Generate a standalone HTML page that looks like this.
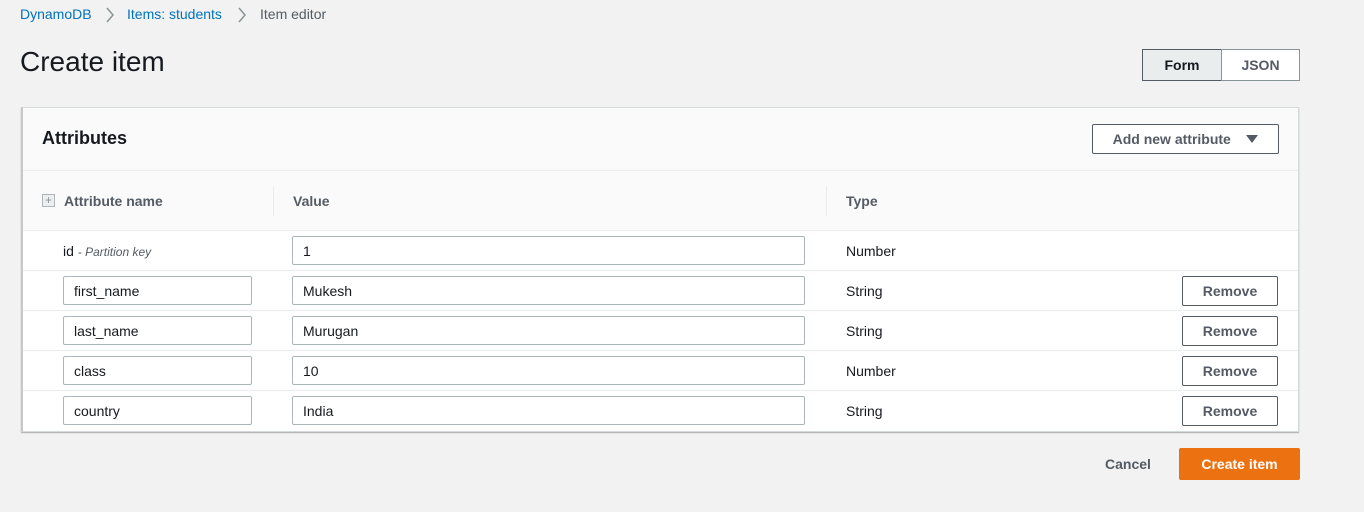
<!DOCTYPE html>
<html><head><style>
*{box-sizing:border-box;margin:0;padding:0}
body{width:1364px;height:512px;background:#f2f2f2;font-family:"Liberation Sans",sans-serif;position:relative;overflow:hidden;color:#16191f}
.a{position:absolute;white-space:nowrap}
.bc{top:6px;font-size:14px}
.lnk{color:#0073bb}
h1{position:absolute;left:20px;top:46px;font-size:28px;font-weight:400;color:#16191f}
.tog{position:absolute;top:49px;height:32px;font-size:14px;font-weight:bold;display:flex;align-items:center;justify-content:center;border:1px solid #545b64}
.panel{position:absolute;left:21px;top:107px;width:1278px;height:325px;background:#fff;border:1px solid #d5dbdb;border-left:2px solid #c7c7c7;box-shadow:0 1px 1px rgba(0,0,0,.3)}
.ph{position:absolute;left:0;top:0;width:100%;height:63px;background:#fafafa;border-bottom:1px solid #eaeded}
.th{position:absolute;left:0;top:63px;width:100%;height:60px;background:#fafafa;border-bottom:1px solid #eaeded}
.row{position:absolute;left:0;width:100%;height:40px;border-bottom:1px solid #eaeded}
.inp{position:absolute;height:29px;border:1px solid #aab7b8;border-radius:2px;background:#fff;font-size:14px;padding:6px 10px;color:#16191f}
.btn{position:absolute;border:1px solid #545b64;border-radius:2px;background:#fff;font-size:14px;font-weight:bold;color:#545b64;display:flex;align-items:center;justify-content:center}
.hd{font-size:14px;font-weight:bold;color:#545b64}
.ty{font-size:14px;color:#16191f}
</style></head><body>
<div class="a bc" style="left:20px"><span class="lnk">DynamoDB</span></div>
<svg class="a" style="left:104px;top:6px" width="12" height="18" viewBox="0 0 12 18"><path d="M3 2 L9 9 L3 16" fill="none" stroke="#879596" stroke-width="1.5"/></svg>
<div class="a bc" style="left:127px"><span class="lnk">Items: students</span></div>
<svg class="a" style="left:236px;top:6px" width="12" height="18" viewBox="0 0 12 18"><path d="M3 2 L9 9 L3 16" fill="none" stroke="#879596" stroke-width="1.5"/></svg>
<div class="a bc" style="left:260px;color:#545b64">Item editor</div>
<h1>Create item</h1>
<div class="tog" style="left:1142px;width:80px;background:#eaeded;color:#16191f">Form</div>
<div class="tog" style="left:1221px;width:79px;background:#fff;color:#545b64;border-color:#879596">JSON</div>

<div class="panel">
 <div class="ph"></div>
 <div class="a" style="left:19px;top:20px;font-size:18px;font-weight:bold">Attributes</div>
 <div class="btn" style="left:1069px;top:16px;width:187px;height:30px">Add new attribute&nbsp;&nbsp;&nbsp;&nbsp;<svg width="12" height="10" viewBox="0 0 12 10"><path d="M0 1 L12 1 L6 9Z" fill="#545b64"/></svg></div>
 <div class="th"></div>
 <div class="a" style="left:19px;top:86px;width:13px;height:13px;border:1px solid #aab7b8;background:#eee;font-size:12px;line-height:10px;text-align:center;color:#879596">+</div>
 <div class="a hd" style="left:41px;top:85px">Attribute name</div>
 <div class="a" style="left:250px;top:78px;width:1px;height:30px;background:#eaeded"></div>
 <div class="a hd" style="left:270px;top:85px">Value</div>
 <div class="a" style="left:803px;top:78px;width:1px;height:30px;background:#eaeded"></div>
 <div class="a hd" style="left:823px;top:85px">Type</div>

 <div class="row" style="top:123px"></div>
 <div class="a" style="left:40px;top:135px;font-size:14px;color:#16191f">id <span style="font-size:12px;font-style:italic;color:#545b64">- Partition key</span></div>
 <div class="inp" style="left:269px;top:128px;width:513px">1</div>
 <div class="a ty" style="left:823px;top:135px">Number</div>

 <div class="row" style="top:163px"></div>
 <div class="inp" style="left:40px;top:168px;width:189px">first_name</div>
 <div class="inp" style="left:269px;top:168px;width:513px">Mukesh</div>
 <div class="a ty" style="left:823px;top:175px">String</div>
 <div class="btn" style="left:1159px;top:168px;width:96px;height:30px">Remove</div>

 <div class="row" style="top:203px"></div>
 <div class="inp" style="left:40px;top:208px;width:189px">last_name</div>
 <div class="inp" style="left:269px;top:208px;width:513px">Murugan</div>
 <div class="a ty" style="left:823px;top:215px">String</div>
 <div class="btn" style="left:1159px;top:208px;width:96px;height:30px">Remove</div>

 <div class="row" style="top:243px"></div>
 <div class="inp" style="left:40px;top:248px;width:189px">class</div>
 <div class="inp" style="left:269px;top:248px;width:513px">10</div>
 <div class="a ty" style="left:823px;top:255px">Number</div>
 <div class="btn" style="left:1159px;top:248px;width:96px;height:30px">Remove</div>

 <div class="inp" style="left:40px;top:288px;width:189px">country</div>
 <div class="inp" style="left:269px;top:288px;width:513px">India</div>
 <div class="a ty" style="left:823px;top:295px">String</div>
 <div class="btn" style="left:1159px;top:288px;width:96px;height:30px">Remove</div>
</div>

<div class="a" style="left:1105px;top:456px;font-size:14px;font-weight:bold;color:#545b64">Cancel</div>
<div class="a" style="left:1179px;top:448px;width:121px;height:32px;background:#ec7211;border-radius:2px;color:#fff;font-size:14px;font-weight:bold;display:flex;align-items:center;justify-content:center">Create item</div>
</body></html>
